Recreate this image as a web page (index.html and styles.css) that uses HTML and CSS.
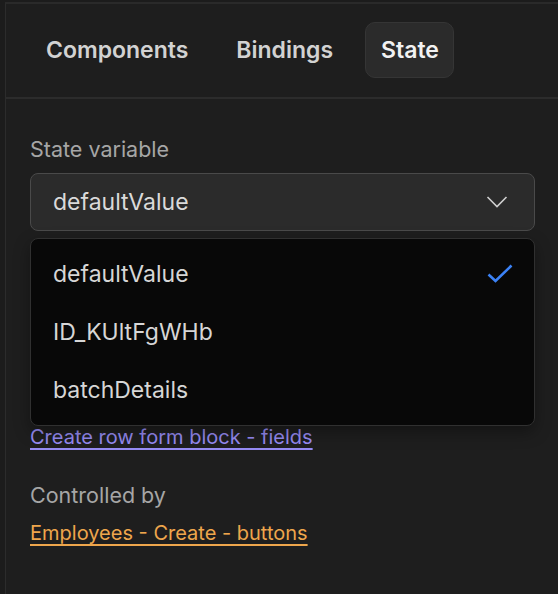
FILE: index.html
```html
<!DOCTYPE html>
<html>
<head>
<meta charset="utf-8">
<link rel="stylesheet" href="styles.css">
</head>
<body>
<div class="frame">
  <div class="panel">
    <nav class="tabs">
      <button class="tab">Components</button>
      <button class="tab">Bindings</button>
      <button class="tab active">State</button>
    </nav>
    <div class="content">
      <div class="field">
        <div class="label">State variable</div>
        <div class="select-wrap">
          <div class="select">
            <span class="select-value">defaultValue</span>
            <svg class="chevron" width="22" height="14" viewBox="0 0 22 14"><polyline points="1.5,2 11,11.5 20.5,2" fill="none" stroke="#cfcfcf" stroke-width="1.6"/></svg>
          </div>
          <ul class="menu">
            <li class="item"><span>defaultValue</span>
              <svg class="check" width="26" height="20" viewBox="0 0 26 20"><polyline points="1.5,10.5 8.5,17 24.5,1.5" fill="none" stroke="#3b82f6" stroke-width="2.6"/></svg>
            </li>
            <li class="item"><span>ID_KUltFgWHb</span></li>
            <li class="item"><span>batchDetails</span></li>
          </ul>
        </div>
      </div>
      <div class="used">
        <a class="link purple" href="#">Create row form block - fields</a>
      </div>
      <div class="field controlled">
        <div class="label">Controlled by</div>
        <a class="link orange" href="#">Employees - Create - buttons</a>
      </div>
    </div>
  </div>
</div>
</body>
</html>
```
FILE: styles.css
```css
* { box-sizing: border-box; }
html, body {
  margin: 0;
  padding: 0;
  background: #1e1e1e;
  font-family: Inter, "Noto Sans", sans-serif;
  height: 100%;
  overflow: hidden;
}
.frame {
  padding: 2px 0 0 5px;
  height: 100%;
  background: #1c1c1c;
}
.panel {
  height: 100%;
  background: #1e1e1e;
  border-top: 2px solid #2a2a2a;
  border-left: 1px solid #2c2c2c;
}
.tabs {
  display: flex;
  gap: 17px;
  padding: 18px 0 19px 24px;
  border-bottom: 2px solid #2c2c2c;
}
.tab {
  height: 56px;
  padding: 0 14px 0 15px;
  font-family: inherit;
  font-size: 23px;
  font-weight: 600;
  color: #d2d2d2;
  background: transparent;
  border: 1px solid transparent;
  border-radius: 10px;
}
.tab.active {
  color: #f2f2f2;
  background: #2b2b2b;
  border-color: #353535;
}
.content {
  padding: 36px 23px 0 24px;
}
.label {
  font-size: 21.5px;
  line-height: 28px;
  color: #a6a6a6;
  margin-bottom: 10px;
}
.select-wrap {
  position: relative;
}
.select {
  height: 58px;
  display: flex;
  align-items: center;
  justify-content: space-between;
  padding: 0 26px 0 22px;
  background: #2b2b2b;
  border: 1px solid #4a4a4a;
  border-radius: 8px;
}
.select-value {
  font-size: 23px;
  color: #dadada;
}
.menu {
  position: absolute;
  left: 0;
  right: 0;
  top: 65px;
  margin: 0;
  padding: 6px 0;
  list-style: none;
  background: #080808;
  border: 1px solid #303030;
  border-radius: 8px;
  box-shadow: 0 6px 16px rgba(0,0,0,0.35);
  z-index: 2;
}
.item {
  height: 58px;
  display: flex;
  align-items: center;
  justify-content: space-between;
  padding: 0 21px 0 22px;
  font-size: 23px;
  color: #d6d6d6;
}
.used {
  margin-top: 192px;
  line-height: 28px;
}
.link {
  font-size: 20px;
  line-height: 28px;
  text-decoration: underline;
  text-underline-offset: 4px;
  text-decoration-thickness: 2px;
}
.purple { color: #968bf3; }
.orange { color: #eea64c; }
.controlled {
  margin-top: 29px;
}
```
